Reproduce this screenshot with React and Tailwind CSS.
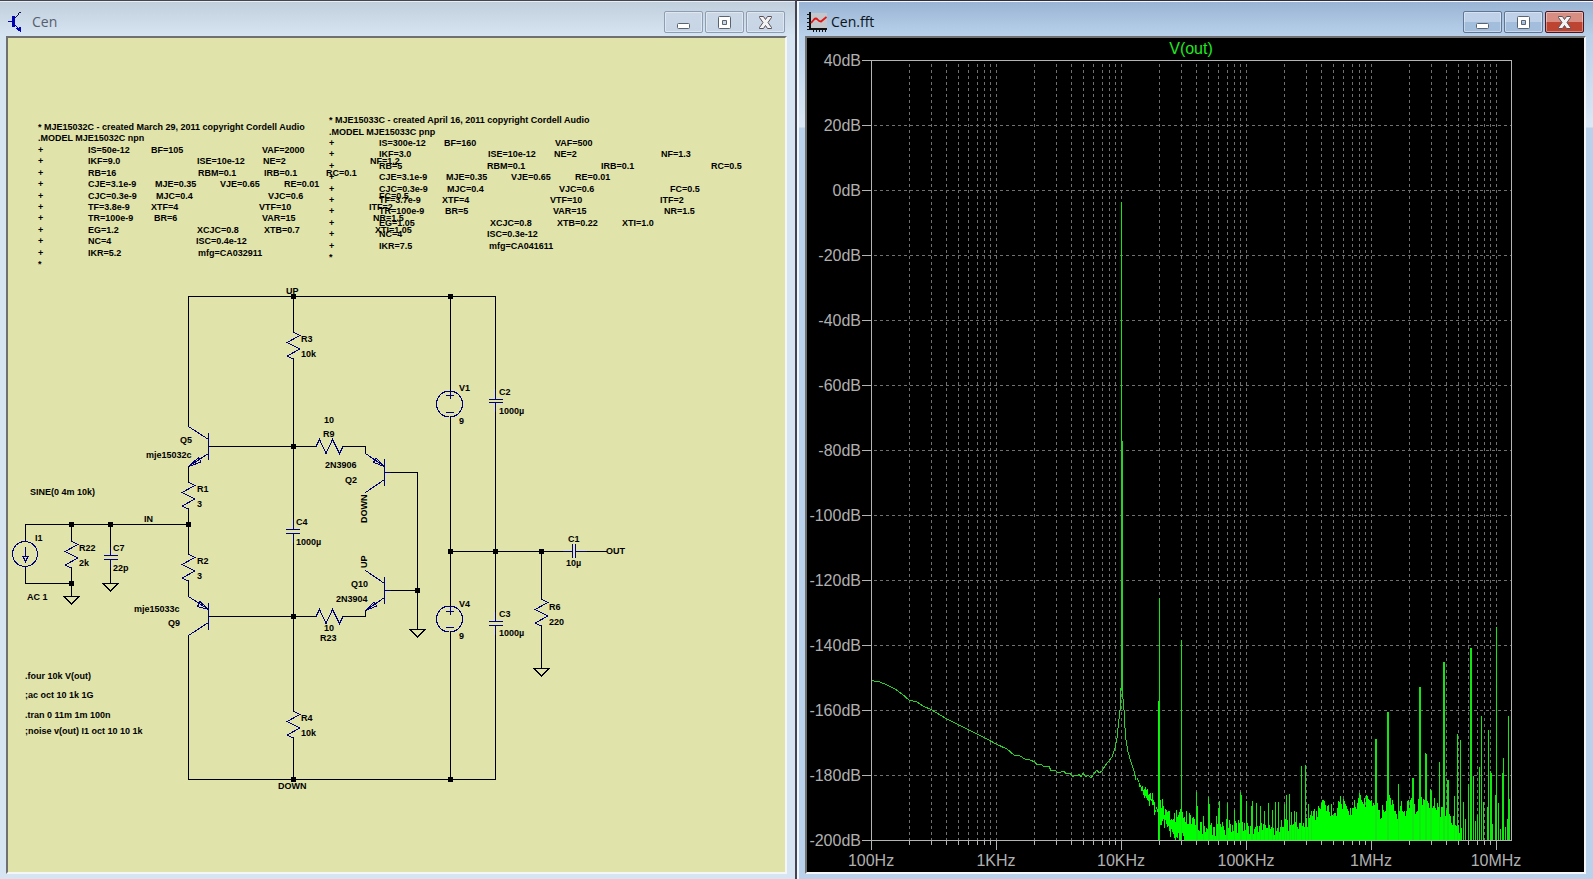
import React from "react";

const MODELS = [
  {
    x: 38,
    title: { y: 130, text: "* MJE15032C - created March 29, 2011 copyright Cordell Audio" },
    model: { y: 141, text: ".MODEL MJE15032C npn" },
    top: 153,
    rows: [
      [[88, "IS=50e-12"], [151, "BF=105"], [262, "VAF=2000"]],
      [[88, "IKF=9.0"], [197, "ISE=10e-12"], [263, "NE=2"], [370, "NF=1.2"]],
      [[88, "RB=16"], [198, "RBM=0.1"], [264, "IRB=0.1"], [326, "RC=0.1"]],
      [[88, "CJE=3.1e-9"], [155, "MJE=0.35"], [220, "VJE=0.65"], [284, "RE=0.01"]],
      [[88, "CJC=0.3e-9"], [156, "MJC=0.4"], [268, "VJC=0.6"], [379, "FC=0.5"]],
      [[88, "TF=3.8e-9"], [151, "XTF=4"], [259, "VTF=10"], [369, "ITF=2"]],
      [[88, "TR=100e-9"], [154, "BR=6"], [262, "VAR=15"], [373, "NR=1.5"]],
      [[88, "EG=1.2"], [197, "XCJC=0.8"], [264, "XTB=0.7"], [375, "XTI=1.05"]],
      [[88, "NC=4"], [196, "ISC=0.4e-12"]],
      [[88, "IKR=5.2"], [198, "mfg=CA032911"]],
    ],
  },
  {
    x: 329,
    title: { y: 123, text: "* MJE15033C - created April 16, 2011 copyright Cordell Audio" },
    model: { y: 135, text: ".MODEL MJE15033C pnp" },
    top: 146,
    rows: [
      [[379, "IS=300e-12"], [444, "BF=160"], [555, "VAF=500"]],
      [[379, "IKF=3.0"], [488, "ISE=10e-12"], [554, "NE=2"], [661, "NF=1.3"]],
      [[379, "RB=5"], [487, "RBM=0.1"], [601, "IRB=0.1"], [711, "RC=0.5"]],
      [[379, "CJE=3.1e-9"], [446, "MJE=0.35"], [511, "VJE=0.65"], [575, "RE=0.01"]],
      [[379, "CJC=0.3e-9"], [447, "MJC=0.4"], [559, "VJC=0.6"], [670, "FC=0.5"]],
      [[379, "TF=3.7e-9"], [442, "XTF=4"], [550, "VTF=10"], [660, "ITF=2"]],
      [[379, "TR=100e-9"], [445, "BR=5"], [553, "VAR=15"], [664, "NR=1.5"]],
      [[379, "EG=1.05"], [490, "XCJC=0.8"], [557, "XTB=0.22"], [622, "XTI=1.0"]],
      [[379, "NC=4"], [487, "ISC=0.3e-12"]],
      [[379, "IKR=7.5"], [489, "mfg=CA041611"]],
    ],
  },
];

const LABELS = [
  [286, 294, "UP"], [301, 342, "R3"], [301, 357, "10k"],
  [180, 443, "Q5"], [146, 458, "mje15032c"],
  [197, 492, "R1"], [197, 507, "3"], [30, 495, "SINE(0 4m 10k)"],
  [144, 522, "IN"], [35, 541, "I1"], [79, 551, "R22"], [79, 566, "2k"],
  [113, 551, "C7"], [113, 571, "22p"], [197, 564, "R2"], [197, 579, "3"],
  [296, 525, "C4"], [296, 545, "1000µ"],
  [324, 423, "10"], [323, 437, "R9"], [325, 468, "2N3906"], [345, 483, "Q2"],
  [351, 587, "Q10"], [336, 602, "2N3904"],
  [27, 600, "AC 1"], [134, 612, "mje15033c"], [168, 626, "Q9"],
  [324, 631, "10"], [320, 641, "R23"],
  [25, 679, ".four 10k V(out)"], [25, 698, ";ac oct 10 1k 1G"],
  [25, 718, ".tran 0 11m 1m 100n"], [25, 734, ";noise v(out) I1 oct 10 10 1k"],
  [301, 721, "R4"], [301, 736, "10k"], [278, 789, "DOWN"],
  [459, 391, "V1"], [459, 424, "9"], [499, 395, "C2"], [499, 414, "1000µ"],
  [459, 607, "V4"], [459, 639, "9"], [499, 617, "C3"], [499, 636, "1000µ"],
  [568, 542, "C1"], [566, 566, "10µ"], [606, 554, "OUT"],
  [549, 610, "R6"], [549, 625, "220"],
];

const NODES = [
  [293, 296], [450, 296], [293, 446], [71, 524], [110, 524], [188, 524], [71, 583],
  [293, 616], [293, 779], [450, 779], [450, 551], [495, 551], [541, 551], [417, 590],
];

const WIRES = [
  "M188.5 426V296.5H495.5V399",
  "M293.5 296V332M293.5 359V519M293.5 543V711M293.5 738V779",
  "M208 446.5H316M343 446.5H365.5V453",
  "M188.5 466V482M188.5 508V554M188.5 580V596",
  "M25.5 541V524.5H188.5",
  "M71.5 524V541M71.5 568V596M25.5 567V583.5H71.5",
  "M110.5 524V547M110.5 568V583",
  "M188.5 635V779.5H495.5V634",
  "M208 616.5H316M343 616.5H365.5V610",
  "M391 472.5H417.5V629M391 590.5H417.5",
  "M450.5 296V391M450.5 417V606M450.5 632V779",
  "M495.5 411V613",
  "M450 551.5H563M587 551.5H607",
  "M541.5 551V599M541.5 626V668",
].join("");

const GROUNDS = [[71, 596], [110, 583], [417, 629], [541, 668]];
const RESISTORS = [[293, 332], [188, 482], [188, 554], [71, 541], [293, 711], [541, 599]];
const H_RESISTORS = [[316, 446], [316, 616]];

const PARTS = [
  // Q5, Q9
  "M188.5 426.5L208.5 439.5M208.5 433V460M208.5 453.5L188.5 466.5L198.5 457.5L201 462L188.5 466.5",
  "M188.5 596.5L208.5 609.5L200 601.5L197.5 606.5L208.5 609.5M208.5 603V630M208.5 622.5L188.5 635.5",
  // Q2, Q10
  "M365.5 453.5L384.5 466.5L376 458L373.5 462.5L384.5 466.5M384.5 459V486M384.5 479.5L365.5 492.5M384 472.5H391",
  "M365.5 570.5L384.5 583.5M384.5 577V604M384.5 597.5L365.5 610.5L374 602L377 606L365.5 610.5M384 590.5H391",
  // capacitors
  "M286 529.5H300M286 533.5H300M293.5 519V529M293.5 533V543",
  "M104 555.5H118M104 559.5H118M110.5 547V555M110.5 560V568",
  "M489 399.5H503M489 402.5H503M495.5 389V399M495.5 403V412",
  "M489 621.5H503M489 625.5H503M495.5 612V621M495.5 625V635",
  "M572.5 544V558M575.5 544V558M563 551.5H572M576 551.5H587",
  // source polarity marks
  "M446 395.5H454M450.5 391V399M446 412.5H454",
  "M446 611.5H454M450.5 606V615M446 627.5H454",
  "M25.5 547V557M23 556.5H28L25.5 561.5Z",
].join("");

const DECADES = ["100Hz", "1KHz", "10KHz", "100KHz", "1MHz", "10MHz"];
const LEVELS = Array.from({ length: 13 }, (_, i) => 40 - i * 20);
const FLOOR = 840;

const freqX = (decade, mult) => Math.round(871 + 125 * (decade + Math.log10(mult))) + 0.5;

const GRID_X = [];
for (let d = 0; d < 6; d++) {
  for (let m = 1; m < 10; m++) {
    const x = freqX(d, m);
    if (x < 1510) GRID_X.push([x, m === 1]);
  }
}

const TRACE =
  "871.5,680.5 880,682 887,685 895,689 902,694 909,700 917,702 923,706 932,710 940,715 947,719 957,724 967,729 977,734 987,739 996,744 1007,749 1014,755 1020,756 1025,759 1030,760 1035,762 1037,765 1040,764 1045,767 1049,766 1051,771 1055,770 1058,773 1064,771 1066,774 1070,773 1073,777 1075,775 1077,776 1079,774 1081,777 1083,773 1086,777 1088,775 1091,778 1094,774 1097,770 1099,773 1102,771 1105,766 1108,762 1112,757 1115,748 1117,738 1118,728 1120,710 1121,688 1121,441 1122,441 1122,688 1124,710 1125,728 1126,740 1128,752 1131,762 1134,771 1136,780";

// [x, top] of the lines that stand out of the noise
const SPIKES = [
  [1121, 202], [1159, 598], [1181, 640],
  [1196, 792], [1197, 806], [1203, 816], [1208, 797], [1209, 804], [1213, 827], [1216, 816], [1218, 808], [1219, 801],
  [1226, 819], [1227, 803], [1234, 810], [1240, 792], [1241, 795], [1246, 801], [1251, 806], [1252, 801], [1256, 803],
  [1260, 806], [1264, 811], [1268, 803], [1272, 810], [1275, 802], [1278, 802], [1281, 820], [1284, 804], [1286, 795],
  [1289, 794], [1291, 812], [1294, 811], [1296, 812], [1301, 766], [1305, 765], [1308, 804], [1311, 811],
  [1375, 739], [1376, 739], [1387, 712], [1388, 712], [1398, 784], [1412, 778], [1413, 778], [1419, 687], [1420, 687],
  [1425, 753], [1426, 754], [1430, 789], [1431, 791], [1439, 762], [1443, 662], [1444, 662], [1447, 780], [1448, 780],
  [1454, 796], [1457, 734], [1460, 740], [1463, 802], [1465, 819], [1468, 784], [1470, 648], [1471, 648], [1473, 776],
  [1475, 821], [1477, 815], [1479, 767], [1481, 716], [1483, 802], [1487, 807], [1488, 730], [1490, 771], [1491, 773],
  [1492, 824], [1495, 795], [1496, 627], [1498, 803], [1500, 829], [1502, 773], [1503, 758], [1505, 827], [1507, 819],
  [1508, 716], [1509, 799],
];

// upper edge of the solid part of the noise
const NOISE_TOP = [
  [1137, 777], [1141, 788], [1145, 787], [1150, 797], [1155, 805], [1158, 806], [1162, 806], [1168, 812], [1175, 815],
  [1182, 815], [1190, 819], [1197, 824], [1204, 829], [1212, 830], [1222, 829], [1232, 826], [1241, 826], [1250, 828],
  [1262, 828], [1275, 829], [1288, 825], [1300, 825], [1310, 820], [1316, 814], [1321, 803], [1326, 808], [1330, 811],
  [1335, 812], [1339, 801], [1344, 806], [1350, 809], [1355, 806], [1359, 795], [1363, 803], [1367, 801], [1370, 796],
  [1374, 806], [1380, 813], [1386, 804], [1391, 799], [1397, 812], [1401, 806], [1405, 812], [1409, 801], [1414, 808],
  [1420, 804], [1424, 800], [1429, 805], [1433, 803], [1438, 811], [1442, 809], [1446, 817], [1451, 817], [1455, 822],
  [1459, 827], [1462, 838],
];

// lower edge while the trace has not reached the floor yet
const NOISE_BOTTOM = [
  [1137, 782], [1142, 792], [1148, 803], [1153, 811], [1157, 818], [1162, 824], [1168, 829], [1174, 834], [1180, 839],
  [1184, 840], [1462, 840],
];

function sample(points, x) {
  for (let i = 1; i < points.length; i++) {
    const [x1, y1] = points[i];
    if (x <= x1) {
      const [x0, y0] = points[i - 1];
      return y0 + ((y1 - y0) * (x - x0)) / (x1 - x0);
    }
  }
  return FLOOR;
}

const jitter = (x) => {
  const v = Math.sin(x * 12.9898) * 43758.5453;
  return v - Math.floor(v) - 0.5;
};

let noise = "";
for (let x = 1137; x < 1462; x++) {
  const amp = x < 1150 ? 5 : 14;
  const top = Math.round(sample(NOISE_TOP, x) + jitter(x) * amp);
  const low = sample(NOISE_BOTTOM, x);
  const bottom = x < 1184 ? Math.min(FLOOR, Math.round(low + jitter(x + 500) * amp)) : FLOOR;
  noise += `M${x + 0.5} ${Math.min(top, bottom - 2)}V${bottom}`;
}
const spikes = SPIKES.map(([x, y]) => `M${x + 0.5} ${y}V${x === 1121 ? 690 : FLOOR}`).join("");

function Schematic() {
  return (
    <svg viewBox="8 38 777 834" className="block w-full h-full" role="img" aria-label="Cen schematic">
      <g fill="none" stroke="#000" shapeRendering="crispEdges">
        <path d={WIRES} />
        {GROUNDS.map(([x, y]) => (
          <path key={`${x}-${y}`} d={`M${x - 7} ${y + 0.5}H${x + 8}L${x + 0.5} ${y + 8}Z`} />
        ))}
      </g>
      <g fill="none" stroke="#00007c" shapeRendering="crispEdges">
        <path d={PARTS} />
        {RESISTORS.map(([x, y]) => (
          <path key={`${x}-${y}`} d={`M${x + 0.5} ${y}l6.500 3.500l-13 7l13 6.500l-13 7l6.500 3`} />
        ))}
        {H_RESISTORS.map(([x, y]) => (
          <path key={y} d={`M${x} ${y + 0.5}l3.500 -7l6.500 14l6.500 -14l7 14l3.500 -7`} />
        ))}
        <circle cx="449.5" cy="404" r="13" />
        <circle cx="449.5" cy="619" r="13" />
        <circle cx="25" cy="554" r="12.5" />
      </g>
      {NODES.map(([x, y]) => (
        <rect key={`${x}-${y}`} x={x - 2} y={y - 2} width="5" height="5" />
      ))}
      <g className="font-['Liberation_Sans',Arial,sans-serif] text-[9px] font-bold">
        {MODELS.map((m) => (
          <g key={m.x}>
            <text x={m.x} y={m.title.y}>{m.title.text}</text>
            <text x={m.x} y={m.model.y}>{m.model.text}</text>
            {m.rows.map((row, i) => {
              const y = m.top + Math.round(i * 11.4);
              return (
                <g key={i}>
                  <text x={m.x} y={y}>+</text>
                  {row.map(([x, t]) => <text key={t} x={x} y={y}>{t}</text>)}
                </g>
              );
            })}
            <text x={m.x} y={m.top + 114}>*</text>
          </g>
        ))}
        {LABELS.map(([x, y, t], i) => <text key={i} x={x} y={y}>{t}</text>)}
        <text transform="translate(367 523) rotate(-90)">DOWN</text>
        <text transform="translate(367 568) rotate(-90)">UP</text>
      </g>
    </svg>
  );
}

function Spectrum() {
  return (
    <svg viewBox="807 38 777 834" className="block w-full h-full" role="img" aria-label="V(out) spectrum">
      <g fill="none" shapeRendering="crispEdges">
        <g stroke="#707070" strokeDasharray="3 3">
          {GRID_X.slice(1).map(([x]) => <path key={x} d={`M${x} 64V840`} />)}
          {LEVELS.slice(1, -1).map((db, i) => <path key={db} d={`M874 ${125.5 + i * 65}H1511`} />)}
        </g>
        <path d={noise} stroke="#00ff00" />
        <path d={spikes} stroke="#14e614" />
        <path d="M1158.5 701V840" stroke="#00ff00" />
        <polyline points={TRACE} stroke="#28d228" />
        <g stroke="#b4b4b4">
          <path d="M871.5 60.5H1511.5V840.5H871.5Z" />
          {LEVELS.map((db, i) => <path key={db} d={`M862 ${60.5 + i * 65}H871`} />)}
          {GRID_X.map(([x, major]) => <path key={x} d={`M${x} 840V${major ? 850 : 845}`} />)}
        </g>
        <path d="M1184 840.5H1461" stroke="#5ae65a" />
      </g>
      <g className="font-['Liberation_Sans',Arial,sans-serif] text-[16px] fill-[#b0b0b0]">
        {LEVELS.map((db, i) => <text key={db} x="861" y={66 + i * 65} textAnchor="end">{db}dB</text>)}
        {DECADES.map((f, i) => <text key={f} x={871 + i * 125} y="866" textAnchor="middle">{f}</text>)}
        <text x="1191" y="54" textAnchor="middle" className="fill-[#20e820]">V(out)</text>
      </g>
    </svg>
  );
}

function SchematicIcon() {
  return (
    <svg width="20" height="20" viewBox="0 0 20 20" shapeRendering="crispEdges" aria-hidden="true">
      <path d="M4 4h3v11H4zM0 9h4v1H0z" fill="#0000b4" />
      <path d="M7 6l3-3l1-2l2-1" stroke="#101050" fill="none" />
      <path d="M7 13l6 6M8 16h4v2h-2zM11 15h1v5h1z" stroke="#0000b4" fill="#0000b4" />
    </svg>
  );
}

function PlotIcon() {
  return (
    <svg width="20" height="20" viewBox="0 0 20 20" aria-hidden="true">
      <path d="M3 1h17v15H3z" fill="#c4c8cc" />
      <path d="M2 0h2v18H2zM2 16h18v2H2z" fill="#111" />
      <path d="M0 2.500h2M0 6.500h2M0 10.500h2M0 14.500h2M0 17.500h2M6.500 18v2M9.500 18v2M12.500 18v2M15.500 18v2M18.500 18v2" stroke="#111" />
      <path d="M4 11L7 7.500Q9 5.500 10.500 7.500Q12 9.500 14 9.500L19.500 5" stroke="#e41414" strokeWidth="1.800" fill="none" />
    </svg>
  );
}

function CaptionIcon({ kind }) {
  return (
    <svg width="15" height="15" viewBox="0 0 15 15" aria-hidden="true">
      {kind === "Minimize" && <rect x="1.500" y="8.500" width="12" height="5" rx="1" fill="#fff" stroke="#5a6470" />}
      {kind === "Maximize" && (
        <path d="M1.500 2.500q0-1 1-1h10q1 0 1 1v10q0 1-1 1h-10q-1 0-1-1zM5.500 5.500v4h4v-4z" fillRule="evenodd" fill="#fff" stroke="#5a6470" />
      )}
      {kind === "Close" && (
        <path d="M1.500 1.500h4l2 3l2-3h4v1l-3.500 5l3.500 5v1h-4l-2-3l-2 3h-4v-1l3.500-5l-3.500-5z" fill="#f4f4f4" stroke="#5a5058" />
      )}
    </svg>
  );
}

const IDLE_BTN = "border-[#8d9eb4] bg-linear-to-b from-[#cbd7e5] to-[#c6d5e6]";
const ACTIVE_BTN = "border-[#5f7694] bg-linear-to-b from-[#bfd1e8] from-50% to-[#a3bddc] to-50%";
const CLOSE_BTN = "border-[#4c1520] bg-linear-to-b from-[#d88d82] from-50% to-[#bd4430] to-50%";

function TitleBar({ title, icon, active }) {
  const base = active ? ACTIVE_BTN : IDLE_BTN;
  return (
    <header className="flex h-[34px] shrink-0 items-start justify-between px-[2px]">
      <div className={`flex items-center gap-1 pt-[10px] ${active ? "text-[#0c1420]" : "text-[#56606c]"}`}>
        {icon}
        <h2 className="font-['Open_Sans','Noto_Sans',sans-serif] text-[14px] leading-5">{title}</h2>
      </div>
      <div className="flex gap-[2px] pt-[9px]">
        {["Minimize", "Maximize", "Close"].map((kind) => (
          <button
            key={kind}
            type="button"
            aria-label={kind}
            className={`flex h-[22px] w-[39px] items-center justify-center rounded-[2px] border inset-ring inset-ring-white/40 ${active && kind === "Close" ? CLOSE_BTN : base}`}
          >
            <CaptionIcon kind={kind} />
          </button>
        ))}
      </div>
    </header>
  );
}

export default function App() {
  return (
    <main className="grid h-screen grid-cols-[797fr_796fr] overflow-hidden bg-[#45454f]">
      <section className="flex min-w-0 flex-col border-t border-r-2 border-[#45454f]">
        <div className="flex min-h-0 flex-1 flex-col border-t border-[#e8eef5] bg-[linear-gradient(#c1cedc,#d7e4f2_34px)] pr-2 pb-[5px] pl-[6px]">
          <TitleBar title="Cen" icon={<SchematicIcon />} />
          <div className="min-h-0 flex-1 border-2 border-t-[#707070] border-r-[#f4f6f8] border-b-[#f4f6f8] border-l-[#707070] bg-[#e0e3aa]">
            <Schematic />
          </div>
        </div>
      </section>
      <section className="flex min-w-0 flex-col border-t border-[#302c38]">
        <div className="flex min-h-0 flex-1 flex-col border-t border-l-2 border-[#f2f8ff] bg-[linear-gradient(#99b4d4,#b9d1ea_34px,#dbe8f6_125px,#b9d1ea_126px)] pr-[7px] pb-[5px] pl-[6px]">
          <TitleBar title="Cen.fft" icon={<PlotIcon />} active />
          <div className="min-h-0 flex-1 border-2 border-t-[#707070] border-r-[#f4f6f8] border-b-[#f4f6f8] border-l-[#707070] bg-black">
            <Spectrum />
          </div>
        </div>
      </section>
    </main>
  );
}
